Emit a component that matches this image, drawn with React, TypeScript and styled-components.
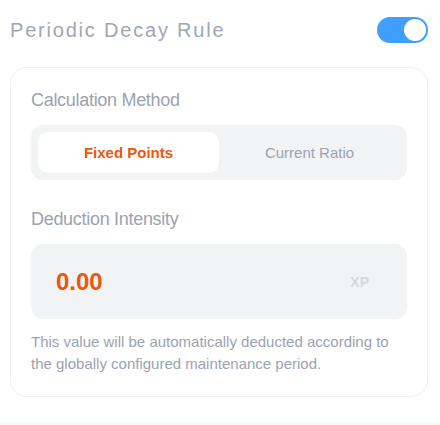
import { useState } from "react";
import styled, { createGlobalStyle } from "styled-components";

type Metodo = "fixed" | "ratio";

const EstiloGlobal = createGlobalStyle`
  * {
    margin: 0;
    padding: 0;
    box-sizing: border-box;
  }

  body {
    background: #ffffff;
    font-family: "Liberation Sans", Arial, sans-serif;
    color: #9ca3af;
  }
`;

const Pagina = styled.div`
  padding: 17px 12px 0 10px;
`;

const Cabecalho = styled.div`
  display: flex;
  align-items: center;
  justify-content: space-between;
  height: 26px;
  margin-bottom: 24px;
`;

const Titulo = styled.h2`
  font-size: 20px;
  font-weight: 400;
  letter-spacing: 1.8px;
  color: #a1a7b2;
`;

const Trilho = styled.button<{ $ligado: boolean }>`
  position: relative;
  width: 51px;
  height: 26px;
  border: none;
  border-radius: 13px;
  background: ${(p) => (p.$ligado ? "#409eff" : "#dcdfe6")};
  cursor: pointer;
`;

const Bolinha = styled.span<{ $ligado: boolean }>`
  position: absolute;
  top: 2px;
  left: ${(p) => (p.$ligado ? "27px" : "2px")};
  width: 22px;
  height: 22px;
  border-radius: 50%;
  background: #ffffff;
  transition: left 0.15s;
`;

const Cartao = styled.div`
  border: 1px solid #eff0f3;
  border-radius: 16px;
  padding: 20px 20px 21px;
  display: flex;
  flex-direction: column;
`;

const Rotulo = styled.div`
  font-size: 18px;
  line-height: 24px;
  letter-spacing: -0.3px;
  color: #9ca3af;
  margin-bottom: 13px;
`;

const Segmentos = styled.div`
  display: flex;
  background: #f2f3f5;
  border-radius: 12px;
  padding: 7px;
  margin-bottom: 27px;
`;

const Segmento = styled.button<{ $ativo: boolean }>`
  flex: 1;
  height: 41px;
  border: none;
  border-radius: 10px;
  font-family: inherit;
  font-size: 15px;
  font-weight: ${(p) => (p.$ativo ? 700 : 400)};
  color: ${(p) => (p.$ativo ? "#ea580c" : "#9ca3af")};
  background: ${(p) => (p.$ativo ? "#ffffff" : "transparent")};
  cursor: pointer;
`;

const CaixaValor = styled.div`
  display: flex;
  align-items: center;
  justify-content: space-between;
  height: 75px;
  padding: 0 38px 0 25px;
  background: #f2f3f5;
  border-radius: 12px;
  margin-bottom: 12px;
`;

const Valor = styled.span`
  font-size: 24px;
  font-weight: 700;
  color: #ea580c;
`;

const Unidade = styled.span`
  font-size: 14px;
  font-weight: 700;
  color: #d4d7dd;
`;

const Descricao = styled.p`
  font-size: 15px;
  line-height: 22px;
  color: #9ca3af;
`;

const Rodape = styled.div`
  margin: 25px -12px 0 -10px;
  height: 20px;
  background: #f5f6f8;
`;

export default function App() {
  const [ligado, setLigado] = useState<boolean>(true);
  const [metodo, setMetodo] = useState<Metodo>("fixed");

  return (
    <>
      <EstiloGlobal />
      <Pagina>
        <Cabecalho>
          <Titulo>Periodic Decay Rule</Titulo>
          <Trilho $ligado={ligado} onClick={() => setLigado(!ligado)}>
            <Bolinha $ligado={ligado} />
          </Trilho>
        </Cabecalho>

        <Cartao>
          <Rotulo>Calculation Method</Rotulo>
          <Segmentos>
            <Segmento $ativo={metodo === "fixed"} onClick={() => setMetodo("fixed")}>
              Fixed Points
            </Segmento>
            <Segmento $ativo={metodo === "ratio"} onClick={() => setMetodo("ratio")}>
              Current Ratio
            </Segmento>
          </Segmentos>

          <Rotulo>Deduction Intensity</Rotulo>
          <CaixaValor>
            <Valor>0.00</Valor>
            <Unidade>XP</Unidade>
          </CaixaValor>

          <Descricao>
            This value will be automatically deducted according to the globally
            configured maintenance period.
          </Descricao>
        </Cartao>

        <Rodape />
      </Pagina>
    </>
  );
}
